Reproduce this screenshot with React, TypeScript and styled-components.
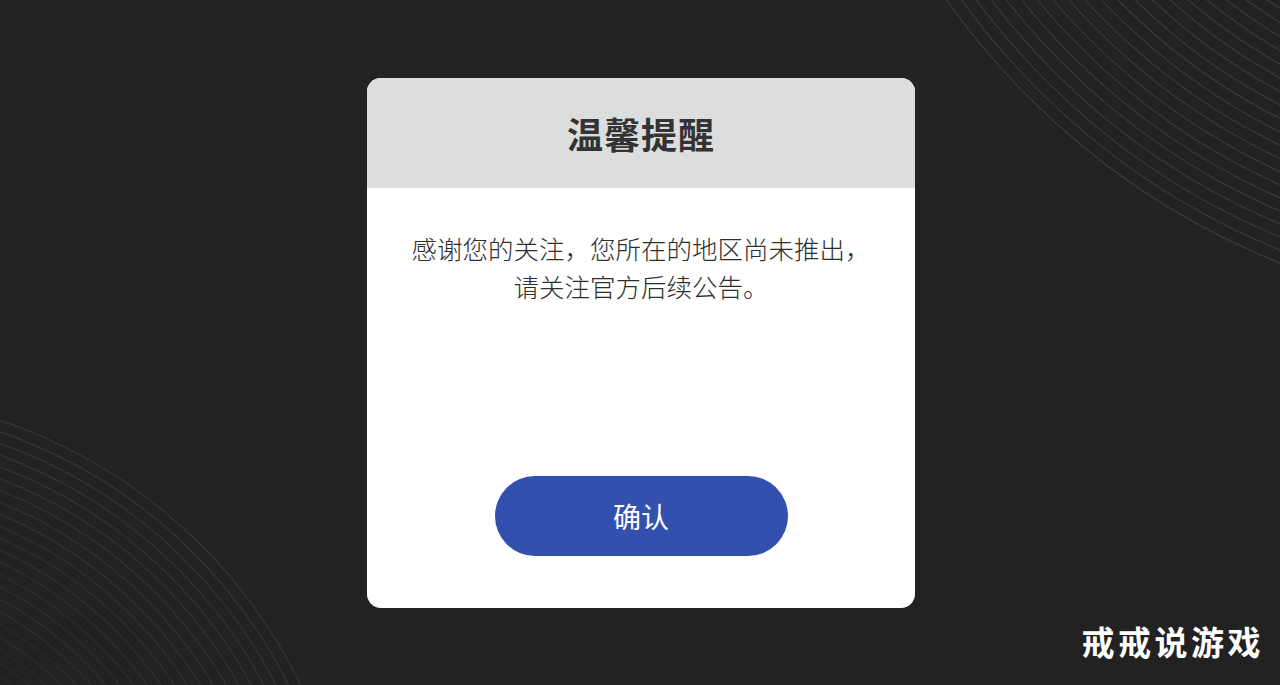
import React from 'react';
import styled, { createGlobalStyle } from 'styled-components';

const GlobalStyle = createGlobalStyle`
    html, body {
        margin: 0;
        padding: 0;
        background: #222222;
    }
    body {
        font-family: "Noto Sans CJK SC", "Noto Sans", sans-serif;
    }
`

const Screen = styled.div`
    position: relative;
    box-sizing: border-box;
    width: 100vw;
    height: 100vh;
    padding-left: 2px;
    overflow: hidden;
    background: #222222;
    display: flex;
    justify-content: center;
    align-items: center;
`

const Rings = styled.svg`
    position: absolute;
    top: 0;
    left: 0;
    width: 100%;
    height: 100%;
    pointer-events: none;
`

const Card = styled.div`
    width: 548px;
    height: 530px;
    border-radius: 14px;
    overflow: hidden;
    background: #ffffff;
    display: flex;
    flex-direction: column;
`

const CardHeader = styled.div`
    height: 110px;
    flex-shrink: 0;
    background: #dcdedd;
    display: flex;
    justify-content: center;
    align-items: center;
`

const Title = styled.h1`
    margin: 0;
    font-size: 36px;
    font-weight: 700;
    color: #333333;
    letter-spacing: 1px;
`

const CardBody = styled.div`
    flex: 1;
    display: flex;
    flex-direction: column;
    align-items: center;
    padding: 41px 20px 52px;
`

const Message = styled.p`
    margin: 0;
    font-size: 25.5px;
    font-weight: 300;
    line-height: 38px;
    color: #2e2e2e;
    text-align: center;
`

const ConfirmButton = styled.button`
    margin-top: auto;
    width: 293px;
    height: 80px;
    border: none;
    border-radius: 40px;
    background: #3350ae;
    color: #ffffff;
    font-family: inherit;
    font-size: 28px;
    cursor: pointer;
`

const Watermark = styled.div`
    position: absolute;
    right: 16px;
    bottom: 20px;
    font-size: 33px;
    font-weight: 700;
    letter-spacing: 3.5px;
    color: #ffffff;
`

function Decoration() {
    const top = Array.from({ length: 26 }, (_, i) => 745 - i * 12);
    const bottom = Array.from({ length: 26 }, (_, i) => 519 - i * 11);
    return (
        <Rings viewBox="0 0 1280 685" preserveAspectRatio="none">
            {top.map((r, i) => (
                <circle key={`t${i}`} cx={1556} cy={-429} r={r} fill="none" stroke="#3a3a3a" strokeWidth={1.2} />
            ))}
            {bottom.map((r, i) => (
                <circle key={`b${i}`} cx={-166} cy={912} r={r} fill="none" stroke="#363636" strokeWidth={1.2} opacity={1 - i * 0.025} />
            ))}
        </Rings>
    );
}

function App() {
    return (
        <>
            <GlobalStyle />
            <Screen>
                <Decoration />
                <Card>
                    <CardHeader>
                        <Title>温馨提醒</Title>
                    </CardHeader>
                    <CardBody>
                        <Message>
                            感谢您的关注，您所在的地区尚未推出，<br />
                            请关注官方后续公告。
                        </Message>
                        <ConfirmButton>确认</ConfirmButton>
                    </CardBody>
                </Card>
                <Watermark>戒戒说游戏</Watermark>
            </Screen>
        </>
    );
}

export default App;
